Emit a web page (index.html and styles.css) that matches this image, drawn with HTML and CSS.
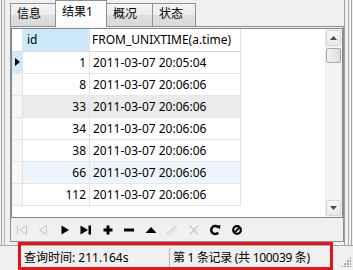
FILE: index.html
```html
<!DOCTYPE html>
<html>
<head>
<meta charset="utf-8">
<link rel="stylesheet" href="styles.css">
</head>
<body>
<div class="app">
  <div class="main">
    <div class="lframe"></div>
    <div class="workspace">
      <div class="tabs">
        <div class="tab t1">信息</div>
        <div class="tab t2 active">结果1</div>
        <div class="tab t3">概况</div>
        <div class="tab t4">状态</div>
      </div>
      <div class="panel">
        <div class="grid">
          <div class="table">
            <div class="row head">
              <div class="ind"></div><div class="c1 hsel">id</div><div class="c2">FROM_UNIXTIME(a.time)</div>
            </div>
            <div class="row cur">
              <div class="ind"><span class="arrow"></span></div><div class="c1">1</div><div class="c2">2011-03-07 20:05:04</div>
            </div>
            <div class="row">
              <div class="ind"></div><div class="c1">8</div><div class="c2">2011-03-07 20:06:06</div>
            </div>
            <div class="row hover">
              <div class="ind"></div><div class="c1">33</div><div class="c2">2011-03-07 20:06:06</div>
            </div>
            <div class="row">
              <div class="ind"></div><div class="c1">34</div><div class="c2">2011-03-07 20:06:06</div>
            </div>
            <div class="row">
              <div class="ind"></div><div class="c1">38</div><div class="c2">2011-03-07 20:06:06</div>
            </div>
            <div class="row alt">
              <div class="ind"></div><div class="c1">66</div><div class="c2">2011-03-07 20:06:06</div>
            </div>
            <div class="row">
              <div class="ind"></div><div class="c1">112</div><div class="c2">2011-03-07 20:06:06</div>
            </div>
          </div>
          <div class="vscroll">
            <div class="sbtn"><svg width="7" height="4" viewBox="0 0 7 4"><path d="M0 4 L3.5 0 L7 4 Z" fill="#4a4a4a"/></svg></div>
            <div class="thumb"></div>
            <div class="track"></div>
            <div class="sbtn"><svg width="7" height="4" viewBox="0 0 7 4"><path d="M0 0 L3.5 4 L7 0 Z" fill="#4a4a4a"/></svg></div>
          </div>
        </div>
        <div class="toolbar">
          <div class="tb"><svg width="12" height="12" viewBox="0 0 12 12"><path d="M1.5 1.5 V10.5 M10.5 1.5 L4 6 L10.5 10.5 Z" fill="none" stroke="#c4c4c4" stroke-width="1"/></svg></div>
          <div class="tb"><svg width="12" height="12" viewBox="0 0 12 12"><path d="M9.5 1.5 L2.5 6 L9.5 10.5 Z" fill="none" stroke="#c4c4c4" stroke-width="1"/></svg></div>
          <div class="tb"><svg width="12" height="12" viewBox="0 0 12 12"><path d="M2.5 1.5 L10 6 L2.5 10.5 Z" fill="#000"/></svg></div>
          <div class="tb"><svg width="12" height="12" viewBox="0 0 12 12"><path d="M0.5 1.5 L8 6 L0.5 10.5 Z" fill="#000"/><rect x="8.5" y="1.5" width="2.5" height="9" fill="#000"/></svg></div>
          <div class="tb"><svg width="12" height="12" viewBox="0 0 12 12"><path d="M6 1.5 V10.5 M1.5 6 H10.5" stroke="#000" stroke-width="3"/></svg></div>
          <div class="tb"><svg width="12" height="12" viewBox="0 0 12 12"><path d="M1 6 H11" stroke="#000" stroke-width="3"/></svg></div>
          <div class="tb"><svg width="12" height="12" viewBox="0 0 12 12"><path d="M0.5 9 L6 3 L11.5 9 Z" fill="#000"/></svg></div>
          <div class="tb"><svg width="14" height="12" viewBox="0 0 14 12"><path d="M1 8 L4 11 L12 2 M2.5 7 L4 8.5 L11 1" fill="none" stroke="#cfcfcf" stroke-width="1"/></svg></div>
          <div class="tb"><svg width="12" height="12" viewBox="0 0 12 12"><path d="M2 1.5 L10 10.5 M10 1.5 L2 10.5" fill="none" stroke="#c8c8c8" stroke-width="1.2"/></svg></div>
          <div class="tb"><svg width="12" height="12" viewBox="0 0 12 12"><path d="M9.2 3.4 A4 4 0 1 0 9.2 8.6" fill="none" stroke="#000" stroke-width="2.4"/><path d="M7 1.5 L11.5 1.2 L10.8 5.6 Z" fill="#000"/></svg></div>
          <div class="tb"><svg width="12" height="12" viewBox="0 0 12 12"><circle cx="6" cy="6" r="3.8" fill="none" stroke="#000" stroke-width="2.2"/><path d="M8.6 3.4 L3.4 8.6" stroke="#000" stroke-width="2"/></svg></div>
        </div>
      </div>
    </div>
    <div class="rframe"></div>
  </div>
  <div class="status">
    <div class="sp sp1">查询时间: 211.164s</div>
    <div class="sp sp2">第 1 条记录 (共 100039 条)</div>
    <div class="grip"></div>
  </div>
  <div class="annot"></div>
</div>
</body>
</html>
```
FILE: styles.css
```css
* { box-sizing: border-box; }
html, body { margin: 0; padding: 0; }
body {
  background: #f0f0f0;
  font: 12px "Noto Sans", "Noto Sans CJK SC", sans-serif;
  color: #000;
}
.app {
  position: relative;
  width: 353px;
  height: 270px;
  overflow: hidden;
}
.main {
  display: flex;
  height: 245px;
}
.lframe {
  width: 4px;
  margin-left: 1px;
  margin-right: 5px;
  border-left: 1px solid #a4a4a4;
  border-right: 1px solid #b4b4b4;
}
.workspace {
  width: 334px;
  display: flex;
  flex-direction: column;
}
.rframe {
  width: 8px;
  border-left: 1px solid #a4a4a4;
  border-right: 1px solid #a4a4a4;
  background: linear-gradient(to right, transparent 3px, #b0b0b0 3px, #b0b0b0 4px, transparent 4px);
}

/* tabs */
.tabs {
  display: flex;
  align-items: flex-end;
  height: 26px;
  position: relative;
  z-index: 1;
}
.tab {
  height: 23px;
  border: 1px solid #8e9096;
  border-bottom: none;
  margin-right: -1px;
  padding: 2px 0 0 6px;
  line-height: 16px;
  background: linear-gradient(#f4f4f4, #ebebeb 50%, #dedede 50%, #d9d9d9);
  border-radius: 1px 1px 0 0;
}
.t1 { width: 46px; }
.t2 { width: 52px; }
.t3 { width: 47px; }
.t4 { width: 44px; }
.tab.active {
  height: 27px;
  margin-bottom: -1px;
  padding-top: 3px;
  background: #fcfcfc;
  position: relative;
  z-index: 2;
}

/* panel */
.panel {
  height: 216px;
  margin-bottom: 3px;
  border: 1px solid #8e9096;
  padding-top: 1px;
  background: #f0f0f0;
  display: flex;
  flex-direction: column;
}
.grid {
  height: 190px;
  border: 1px solid #828790;
  display: flex;
  background: #fff;
}
.table {
  flex: 1;
  background: #fff;
}
.row {
  display: flex;
  height: 22px;
  line-height: 21px;
}
.row.head {
  height: 23px;
  line-height: 22px;
}
.ind {
  width: 11px;
  background: #f6f6f6;
  border-right: 1px solid #e2e2e2;
  border-bottom: 1px solid #e6e6e6;
  position: relative;
}
.c1 {
  width: 67px;
  text-align: right;
  padding-right: 3px;
  border-right: 1px solid #e2e2e2;
  border-bottom: 1px solid #e6e6e6;
}
.c2 {
  width: 151px;
  padding-left: 3px;
  border-right: 1px solid #e2e2e2;
  border-bottom: 1px solid #e6e6e6;
  white-space: nowrap;
  overflow: hidden;
}
.head .ind { background: #fff; border-bottom-color: #d8d8d8; }
.head .c1 { text-align: left; padding-left: 4px; border-bottom-color: #d8d8d8; }
.head .c2 { padding-left: 2px; border-bottom-color: #d8d8d8; }
.head .hsel { background: #cde8f8; }
.cur .ind { background: #d3e9f8; }
.hover .c1, .hover .c2 { background: #ebebeb; }
.alt .c1, .alt .c2 { background: #eef5fc; }
.arrow {
  position: absolute;
  left: 3px;
  top: 6px;
  width: 0;
  height: 0;
  border-top: 4.5px solid transparent;
  border-bottom: 4.5px solid transparent;
  border-left: 5px solid #000;
}

/* scrollbar */
.vscroll {
  width: 17px;
  background: #f3f3f3;
  border-left: 1px solid #ececec;
  display: flex;
  flex-direction: column;
  padding: 1px 0 1px 0;
}
.sbtn {
  height: 16px;
  margin: 0 1px 0 0;
  border: 1px solid #d6d6d6;
  border-radius: 2px;
  background: linear-gradient(#f8f8f8, #e8e8e8);
  display: flex;
  align-items: center;
  justify-content: center;
}
.thumb {
  height: 15px;
  margin: 2px 1px 0 0;
  border: 1px solid #a8a8a8;
  border-radius: 2px;
  background: linear-gradient(to right, #f2f2f2, #dedede);
}
.track { flex: 1; }

/* toolbar */
.toolbar {
  flex: 1;
  display: flex;
  align-items: center;
  padding-left: 0;
}
.tb {
  width: 21.5px;
  height: 16px;
  display: flex;
  align-items: center;
  justify-content: center;
}
.tb svg { display: block; }

/* status */
.status {
  height: 25px;
  border-top: 1px solid #a8a8a8;
  display: flex;
  align-items: center;
  position: relative;
}
.sp {
  height: 20px;
  line-height: 20px;
  white-space: nowrap;
}
.sp1 {
  width: 170px;
  padding-left: 24px;
  border-right: 1px solid #b8b8b8;
}
.sp2 {
  padding-left: 3px;
  letter-spacing: -0.3px;
}
.grip {
  position: absolute;
  right: 2px;
  bottom: 3px;
  width: 10px;
  height: 10px;
  background:
    radial-gradient(circle at 1px 1px, #a0a0a0 1px, transparent 1.2px) 0 0 / 3px 3px;
  clip-path: polygon(100% 0, 100% 100%, 0 100%);
}

/* annotation */
.annot {
  position: absolute;
  left: 18px;
  top: 242px;
  width: 315px;
  height: 28px;
  border: 3px solid #e4141c;
  pointer-events: none;
}
```
